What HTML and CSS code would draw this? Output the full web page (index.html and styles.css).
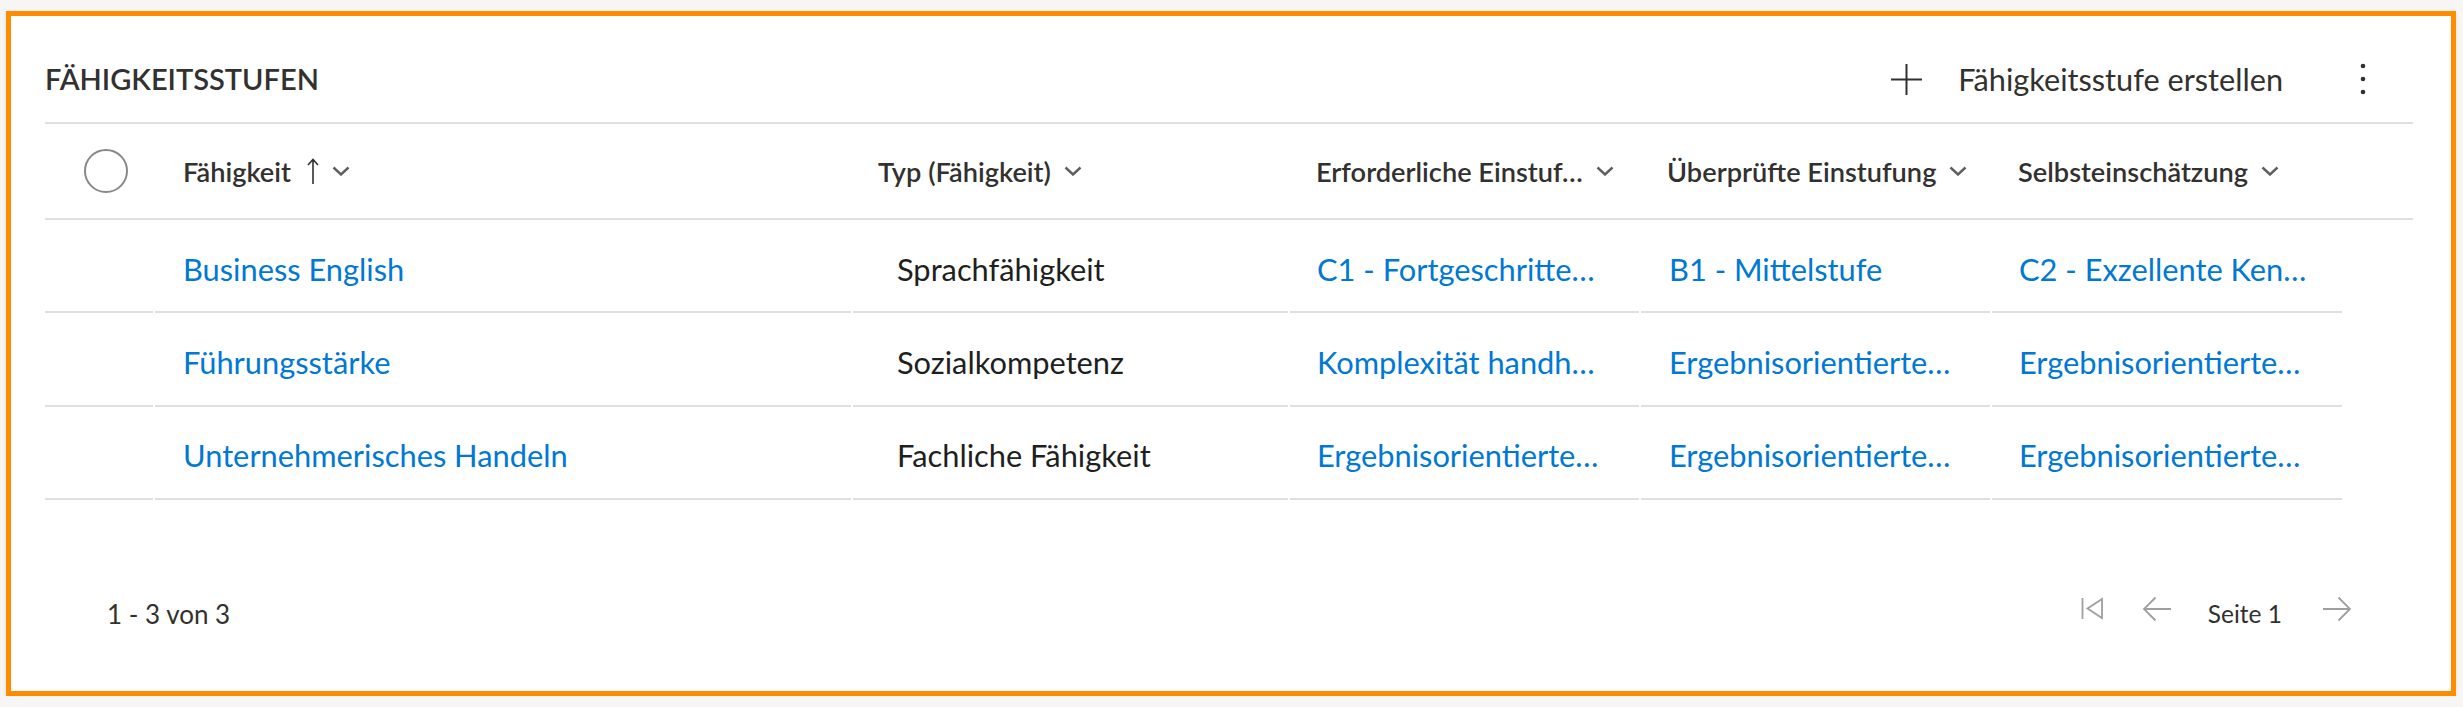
FILE: index.html
```html
<!DOCTYPE html>
<html lang="de">
<head>
<meta charset="utf-8">
<title>Fähigkeitsstufen</title>
<link rel="stylesheet" href="styles.css">
</head>
<body>
<section class="card">
  <header class="card-header">
    <h2 class="title">FÄHIGKEITSSTUFEN</h2>
    <div class="commands">
      <button class="cmd" type="button">
        <svg class="ico-plus" width="31" height="31" viewBox="0 0 31 31"><path d="M15.5 0v31M0 15.5h31"/></svg>
        <span>Fähigkeitsstufe erstellen</span>
      </button>
      <button class="more" type="button" aria-label="Weitere Befehle">
        <svg width="6" height="32" viewBox="0 0 6 32"><circle cx="3" cy="3" r="2.3"/><circle cx="3" cy="16" r="2.3"/><circle cx="3" cy="29" r="2.3"/></svg>
      </button>
    </div>
  </header>

  <div class="grid">
    <div class="grid-head">
      <div class="hcell hcell-check"><span class="check"></span></div>
      <div class="hcell hcell-name">
        <span>Fähigkeit</span>
        <svg class="ico-sort" width="12" height="26" viewBox="0 0 12 26"><path d="M6 1.5V26M1 7l5-5.5 5 5.5"/></svg>
        <svg class="ico-chev chev-tight" width="18" height="10" viewBox="0 0 18 10"><path d="M1.5 1.5l7.5 7 7.5-7"/></svg>
      </div>
      <div class="hcell hcell-type">
        <span>Typ (Fähigkeit)</span>
        <svg class="ico-chev" width="18" height="10" viewBox="0 0 18 10"><path d="M1.5 1.5l7.5 7 7.5-7"/></svg>
      </div>
      <div class="hcell">
        <span>Erforderliche Einstuf…</span>
        <svg class="ico-chev" width="18" height="10" viewBox="0 0 18 10"><path d="M1.5 1.5l7.5 7 7.5-7"/></svg>
      </div>
      <div class="hcell">
        <span>Überprüfte Einstufung</span>
        <svg class="ico-chev" width="18" height="10" viewBox="0 0 18 10"><path d="M1.5 1.5l7.5 7 7.5-7"/></svg>
      </div>
      <div class="hcell">
        <span>Selbsteinschätzung</span>
        <svg class="ico-chev" width="18" height="10" viewBox="0 0 18 10"><path d="M1.5 1.5l7.5 7 7.5-7"/></svg>
      </div>
    </div>

    <div class="grid-row">
      <div class="cell"></div>
      <div class="cell cell-name"><a class="link" href="#">Business English</a></div>
      <div class="cell cell-type">Sprachfähigkeit</div>
      <div class="cell"><a class="link" href="#">C1 - Fortgeschritte…</a></div>
      <div class="cell cell-4"><a class="link" href="#">B1 - Mittelstufe</a></div>
      <div class="cell"><a class="link" href="#">C2 - Exzellente Ken…</a></div>
    </div>
    <div class="grid-row">
      <div class="cell"></div>
      <div class="cell cell-name"><a class="link" href="#">Führungsstärke</a></div>
      <div class="cell cell-type">Sozialkompetenz</div>
      <div class="cell"><a class="link" href="#">Komplexität handh…</a></div>
      <div class="cell cell-4"><a class="link" href="#">Ergebnisorientierte…</a></div>
      <div class="cell"><a class="link" href="#">Ergebnisorientierte…</a></div>
    </div>
    <div class="grid-row">
      <div class="cell"></div>
      <div class="cell cell-name"><a class="link" href="#">Unternehmerisches Handeln</a></div>
      <div class="cell cell-type">Fachliche Fähigkeit</div>
      <div class="cell"><a class="link" href="#">Ergebnisorientierte…</a></div>
      <div class="cell cell-4"><a class="link" href="#">Ergebnisorientierte…</a></div>
      <div class="cell"><a class="link" href="#">Ergebnisorientierte…</a></div>
    </div>
  </div>

  <footer class="footer">
    <span class="count">1 - 3 von 3</span>
    <nav class="pager">
      <svg class="pg-ico pg-first" width="23" height="23" viewBox="0 0 23 23"><path d="M1.5 1v21M21 2L6.5 11.5 21 21z"/></svg>
      <svg class="pg-ico pg-prev" width="30" height="26" viewBox="0 0 30 26"><path d="M29 13H2M13.5 1.5L2 13l11.5 11.5"/></svg>
      <span class="page">Seite 1</span>
      <svg class="pg-ico pg-next" width="30" height="26" viewBox="0 0 30 26"><path d="M1 13h27M16.5 1.5L28 13 16.5 24.5"/></svg>
    </nav>
  </footer>
</section>
</body>
</html>
```
FILE: styles.css
```css
html, body {
  margin: 0;
  padding: 0;
}
body {
  background: #f7f6f5;
  font-family: Lato, "Open Sans", sans-serif;
  color: #323130;
  overflow: hidden;
}

.card {
  box-sizing: border-box;
  width: 2450px;
  margin: 11px 0 0 6px;
  border: 5px solid #ff8c00;
  background: #ffffff;
  padding: 0 38px 0 34px;
  box-shadow: 0 3px 5px rgba(0, 0, 0, 0.08);
}

/* ---------- header ---------- */
.card-header {
  box-sizing: border-box;
  height: 108px;
  padding-top: 20px;
  display: flex;
  align-items: center;
  justify-content: space-between;
  border-bottom: 2px solid #e1dfdd;
}
.title {
  margin: 0;
  font-size: 29px;
  font-weight: 600;
  color: #323130;
  line-height: 1.2;
}
.commands {
  display: flex;
  align-items: center;
  margin-right: 47px;
}
.cmd {
  display: flex;
  align-items: center;
  gap: 36px;
  background: none;
  border: 0;
  padding: 0;
  font-family: inherit;
  font-size: 30.7px;
  color: #323130;
  cursor: pointer;
}
.ico-plus path {
  stroke: #323130;
  stroke-width: 2;
  fill: none;
}
.more {
  margin-left: 77px;
  background: none;
  border: 0;
  padding: 0;
  display: flex;
  align-items: center;
}
.more circle {
  fill: #323130;
}

/* ---------- grid ---------- */
.grid-head,
.grid-row {
  display: grid;
  grid-template-columns: 108px 696px 435px 349px 349px 350px;
  column-gap: 2px;
}
.grid-head {
  box-sizing: border-box;
  height: 96px;
  border-bottom: 2px solid #e1dfdd;
}
.hcell {
  display: flex;
  align-items: center;
  padding-left: 26px;
  font-size: 27.2px;
  font-weight: 600;
  color: #323130;
  white-space: nowrap;
}
.hcell-check {
  padding-left: 39px;
}
.hcell-name {
  padding-left: 28px;
}
.hcell-type {
  padding-left: 25px;
}
.check {
  box-sizing: border-box;
  width: 44px;
  height: 44px;
  border: 2px solid #8a8886;
  border-radius: 50%;
}
.ico-sort {
  margin-left: 16px;
}
.ico-sort path {
  stroke: #323130;
  stroke-width: 1.6;
  fill: none;
}
.ico-chev {
  margin-left: 13px;
}
.ico-chev path {
  stroke: #605e5c;
  stroke-width: 2.4;
  fill: none;
}

.grid-row {
  height: 93.3px;
}
.cell {
  box-sizing: border-box;
  border-bottom: 2px solid #e1dfdd;
  display: flex;
  align-items: center;
  padding: 7px 0 0 27px;
  font-size: 30.8px;
  color: #201f1e;
  white-space: nowrap;
  overflow: hidden;
}
.cell-name {
  padding-left: 28px;
}
.cell-type {
  padding-left: 44px;
}
.cell-4 {
  padding-left: 28px;
}
.link {
  color: #0078d4;
  text-decoration: none;
}

/* ---------- footer ---------- */
.footer {
  box-sizing: border-box;
  height: 60px;
  margin: 84px 0 47px;
  padding: 0 61px 0 62px;
  display: flex;
  align-items: center;
  justify-content: space-between;
}
.count {
  font-size: 26px;
  color: #323130;
}
.pager {
  display: flex;
  align-items: center;
}
.page {
  font-size: 24.5px;
  color: #323130;
}
.pg-ico {
  margin-bottom: 10px;
}
.pg-ico path {
  stroke: #a19f9d;
  stroke-width: 1.8;
  fill: none;
}
.pg-first {
  margin-right: 38px;
}
.pg-prev {
  margin-right: 36px;
}
.pg-next {
  margin-left: 40px;
}
```
